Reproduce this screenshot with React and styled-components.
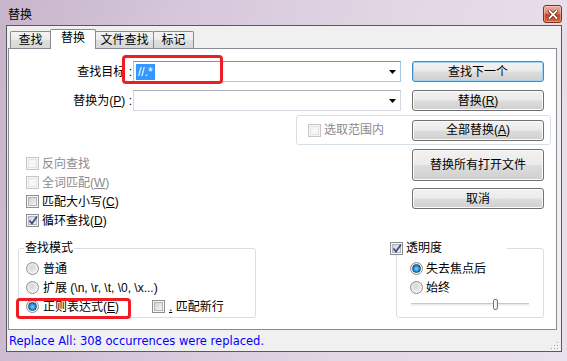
import React from 'react';
import styled, { createGlobalStyle } from 'styled-components';

const GlobalStyle = createGlobalStyle`
  html, body { margin: 0; padding: 0; }
  body {
    width: 567px; height: 361px; overflow: hidden;
    font-family: "Liberation Sans", "Noto Sans CJK SC", sans-serif;
    font-size: 12px; color: #000;
  }
  * { box-sizing: border-box; }
`;

const Window = styled.div`
  width: 567px; height: 361px;
  display: flex; flex-direction: column;
  background: linear-gradient(100deg, #c7b5cc 0%, #d6c7da 30%, #e2d7e5 65%, #e9e1eb 100%);
`;

const TitleBar = styled.div`
  flex: none; height: 25px;
  display: flex; align-items: flex-start; justify-content: space-between;
  padding: 0 5px 0 8px;
`;

const Title = styled.div`
  margin-top: 8px; line-height: 14px; font-size: 12px;
`;

const CloseButton = styled.div`
  margin-top: 5px; width: 19px; height: 18px;
  border: 1px solid #7a3024; border-radius: 3px;
  background: linear-gradient(#eeb0a0 0%, #dc7e66 45%, #c7421f 55%, #d86436 100%);
  box-shadow: inset 0 0 0 1px rgba(255, 255, 255, 0.35);
  display: flex; align-items: center; justify-content: center;
`;

const Client = styled.div`
  flex: 1; margin: 0 5px 9px 6px;
  border: 1px solid #5a5a5a; background: #f0f0f0;
  display: flex; flex-direction: column;
`;

const TabStrip = styled.div`
  flex: none; height: 22px; padding-left: 3px;
  display: flex; align-items: flex-end;
`;

const Tab = styled.div`
  position: relative;
  width: ${p => p.$w}px;
  margin-left: ${p => (p.$first ? 0 : -1)}px;
  height: ${p => (p.$active ? 20 : 17)}px;
  margin-bottom: ${p => (p.$active ? -1 : 0)}px;
  z-index: ${p => (p.$active ? 2 : 1)};
  border: 1px solid #898c95; border-bottom: none; border-radius: 2px 2px 0 0;
  background: ${p => (p.$active ? '#fff' : 'linear-gradient(#f4f4f4, #ebebeb 50%, #dfdfdf 50%, #d7d7d7)')};
  text-align: center;
  padding-top: ${p => (p.$active ? 0 : 1)}px;
  line-height: ${p => (p.$active ? 17 : 15)}px;
  white-space: nowrap;
`;

const Panel = styled.div`
  flex: none; height: 282px; margin: 0 4px 0 1px;
  border: 1px solid #898c95; background: #fff;
  display: flex; flex-direction: column; padding-top: 12px;
`;

const FieldRow = styled.div`
  position: relative; display: flex; align-items: center; height: 21px;
  margin-top: ${p => p.$mt || 0}px;
`;

const FieldLabel = styled.label`
  width: 124px; padding-right: 1px; text-align: right; line-height: 14px; white-space: nowrap;
`;

const Combo = styled.div`
  width: 268px; height: 21px; background: #fff;
  border: 1px solid ${p => (p.$focus ? '#a9c8e6' : '#d3d9e1')};
  border-top-color: ${p => (p.$focus ? '#6d97c4' : '#abadb3')};
  display: flex; align-items: center; padding: 0 4px 0 2px;
`;

const SelectedText = styled.span`
  background: #3399ff; color: #fff; line-height: 16px; padding: 0 2px;
`;

const Arrow = styled.svg`
  margin-left: auto; flex: none;
`;

const Button = styled.button`
  flex: none; width: 132px; height: ${p => (p.$tall ? 32 : 21)}px;
  margin-left: ${p => (p.$ml ? `${p.$ml}px` : '0')};
  padding: 0; font: inherit; color: #000; line-height: 14px;
  border: 1px solid ${p => (p.$default ? '#3c8cc4' : '#707070')}; border-radius: 3px;
  background: linear-gradient(#f2f2f2 0%, #ebebeb 48%, #dddddd 52%, #cfcfcf 100%);
  box-shadow: inset 0 0 0 1px ${p => (p.$default ? '#9fd6f5' : '#fbfbfb')};
  white-space: nowrap;
`;

const PushRight = styled.div`
  margin-left: auto;
`;

const ScopeGroup = styled.div`
  margin: 4px 5px 0 auto; width: 255px; height: 30px;
  border: 1px solid #d5dfe5; border-radius: 3px;
  display: flex; align-items: center; padding: 0 6px 0 11px;
`;

const Mn = styled.u`
  text-decoration: underline; text-underline-offset: 1px;
`;

const OptionsArea = styled.div`
  display: flex; align-items: flex-start;
`;

const CheckList = styled.div`
  display: flex; flex-direction: column; margin-left: 17px; padding-top: 9px;
`;

const ActionColumn = styled.div`
  margin-left: auto; margin-right: 12px; padding-top: 4px;
  display: flex; flex-direction: column; gap: 7px;
`;

const OptionRow = styled.div`
  position: relative; height: 19px; display: flex; align-items: center;
  gap: ${p => p.$gap || 4}px; line-height: 14px; white-space: nowrap;
  color: ${p => (p.$disabled ? '#8b8b8b' : '#000')};
`;

const OptionLabel = styled.span`
  width: ${p => (p.$w ? `${p.$w}px` : 'auto')};
`;

const Box = styled.span`
  position: relative; flex: none; width: 13px; height: 13px;
  border: 1px solid ${p => (p.$disabled ? '#c6c6c6' : '#8e8f8f')};
  background: #f6f6f6;
  &::before {
    content: ''; position: absolute; left: 1px; top: 1px; right: 1px; bottom: 1px;
    border: 1px solid ${p => (p.$disabled ? '#e3e3e3' : '#b2b6bc')};
    background: ${p => (p.$disabled ? '#f7f7f7' : 'linear-gradient(135deg, #cfd2d6, #f4f4f4)')};
  }
`;

const Tick = styled.svg`
  position: absolute; left: 0; top: -1px;
`;

const RadioDot = styled.span`
  flex: none; width: 13px; height: 13px; border-radius: 50%;
  border: 1px solid #8e8f8f;
  background: radial-gradient(circle at 45% 40%, #d8d8d8 0%, #e6e6e6 45%, #fbfbfb 80%);
  display: flex; align-items: center; justify-content: center;
  &::after {
    content: ''; display: ${p => (p.$on ? 'block' : 'none')};
    width: 7px; height: 7px; border-radius: 50%;
    border: 1px solid #1f4f82;
    background: radial-gradient(circle at 50% 55%, #7ad6ff 0%, #2d8fd8 50%, #124a86 100%);
  }
`;

const GroupsRow = styled.div`
  display: flex; align-items: flex-start; margin-top: 18px;
`;

const GroupBox = styled.div`
  position: relative; flex: none;
  width: ${p => p.$w}px; height: 70px;
  margin: ${p => p.$margin};
  border: 1px solid #d5dfe5; border-radius: 3px;
  padding: 10px 0 0 ${p => p.$pl}px;
`;

const Legend = styled.div`
  position: absolute; top: -7px; left: ${p => p.$left}px;
  width: ${p => (p.$w ? `${p.$w}px` : 'auto')};
  height: 13px; background: #fff; padding: 0 1px;
  display: flex; align-items: center; gap: 3px; line-height: 13px; white-space: nowrap;
`;

const Highlight = styled.div`
  position: absolute; pointer-events: none; z-index: 5;
  left: ${p => p.$x}px; top: ${p => p.$y}px; width: ${p => p.$w}px; height: ${p => p.$h}px;
  border: 3px solid #ee1d23; border-radius: 4px;
`;

const Slider = styled.div`
  position: relative; width: 118px; height: 19px; margin-left: 1px; padding-top: 6px;
`;

const Track = styled.div`
  height: 3px; background: #e9ecec;
  border-top: 1px solid #c8c8c8; border-bottom: 1px solid #f4f4f4;
`;

const Thumb = styled.div`
  position: absolute; left: 82px; top: 2px; width: 5px; height: 11px;
  border: 1px solid #777; border-radius: 2px;
  background: linear-gradient(90deg, #ffffff, #e6e6e6);
`;

const StatusBar = styled.div`
  flex: 1; display: flex; align-items: center; padding-left: 2px;
  color: #0000ff; font-family: "DejaVu Sans", sans-serif; font-size: 11.5px;
`;

const Grip = styled.svg`
  margin-left: auto; align-self: flex-end; margin-right: 2px; margin-bottom: 1px;
`;

function CheckBox({ checked, disabled }) {
  return (
    <Box $disabled={disabled}>
      {checked && (
        <Tick width="13" height="13" viewBox="0 0 13 13">
          <path d="M2.5 6.5 L5 9.5 L10 2.5" fill="none" stroke="#3b4c8f" strokeWidth="1.8" />
        </Tick>
      )}
    </Box>
  );
}

function CheckOption({ checked, disabled, children }) {
  return (
    <OptionRow $disabled={disabled} $gap={3}>
      <CheckBox checked={checked} disabled={disabled} />
      <span>{children}</span>
    </OptionRow>
  );
}

const tabs = [
  { label: '查找', w: 41 },
  { label: '替换', w: 46, active: true },
  { label: '文件查找', w: 59 },
  { label: '标记', w: 41 },
];

export default function App() {
  return (
    <>
      <GlobalStyle />
      <Window>
        <TitleBar>
          <Title>替换</Title>
          <CloseButton>
            <svg width="10" height="9" viewBox="0 0 10 9">
              <path d="M1.5 1 L8.5 8 M8.5 1 L1.5 8" stroke="#5a1a10" strokeWidth="3.2" strokeLinecap="square" />
              <path d="M1.5 1 L8.5 8 M8.5 1 L1.5 8" stroke="#fff" strokeWidth="1.8" strokeLinecap="square" />
            </svg>
          </CloseButton>
        </TitleBar>
        <Client>
          <TabStrip>
            {tabs.map((t, i) => (
              <Tab key={t.label} $w={t.w} $active={t.active} $first={i === 0}>
                {t.label}
              </Tab>
            ))}
          </TabStrip>
          <Panel>
            <FieldRow>
              <FieldLabel>查找目标 :</FieldLabel>
              <Combo $focus>
                <SelectedText>//.*</SelectedText>
                <Arrow width="7" height="4" viewBox="0 0 7 4">
                  <path d="M0 0 H7 L3.5 4 Z" fill="#000" />
                </Arrow>
              </Combo>
              <Button $default $ml={11}>查找下一个</Button>
              <Highlight $x={113} $y={-6} $w={101} $h={29} />
            </FieldRow>
            <FieldRow $mt={8}>
              <FieldLabel>
                替换为(<Mn>P</Mn>) :
              </FieldLabel>
              <Combo>
                <Arrow width="7" height="4" viewBox="0 0 7 4">
                  <path d="M0 0 H7 L3.5 4 Z" fill="#000" />
                </Arrow>
              </Combo>
              <Button $ml={11}>
                替换(<Mn>R</Mn>)
              </Button>
            </FieldRow>
            <ScopeGroup>
              <CheckOption disabled>选取范围内</CheckOption>
              <PushRight>
                <Button>
                  全部替换(<Mn>A</Mn>)
                </Button>
              </PushRight>
            </ScopeGroup>
            <OptionsArea>
              <CheckList>
                <CheckOption disabled>反向查找</CheckOption>
                <CheckOption disabled>
                  全词匹配(<Mn>W</Mn>)
                </CheckOption>
                <CheckOption>
                  匹配大小写(<Mn>C</Mn>)
                </CheckOption>
                <CheckOption checked>
                  循环查找(<Mn>D</Mn>)
                </CheckOption>
              </CheckList>
              <ActionColumn>
                <Button $tall>替换所有打开文件</Button>
                <Button>取消</Button>
              </ActionColumn>
            </OptionsArea>
            <GroupsRow>
              <GroupBox $w={238} $pl={7} $margin="0 0 0 9px">
                <Legend $left={5}>查找模式</Legend>
                <OptionRow>
                  <RadioDot />
                  <span>普通</span>
                </OptionRow>
                <OptionRow>
                  <RadioDot />
                  <span>{'扩展 (\\n, \\r, \\t, \\0, \\x...)'}</span>
                </OptionRow>
                <OptionRow>
                  <RadioDot $on />
                  <OptionLabel $w={105}>
                    正则表达式(<Mn>E</Mn>)
                  </OptionLabel>
                  <CheckBox />
                  <span>
                    <Mn>.</Mn> 匹配新行
                  </span>
                  <Highlight $x={-10} $y={1} $w={115} $h={21} />
                </OptionRow>
              </GroupBox>
              <GroupBox $w={148} $pl={13} $margin="0 12px 0 auto">
                <Legend $left={-8} $w={118}>
                  <CheckBox checked />
                  <span>透明度</span>
                </Legend>
                <OptionRow $gap={3}>
                  <RadioDot $on />
                  <span>失去焦点后</span>
                </OptionRow>
                <OptionRow $gap={3}>
                  <RadioDot />
                  <span>始终</span>
                </OptionRow>
                <Slider>
                  <Track />
                  <Thumb />
                </Slider>
              </GroupBox>
            </GroupsRow>
          </Panel>
          <StatusBar>
            <span>Replace All: 308 occurrences were replaced.</span>
            <Grip width="10" height="10" viewBox="0 0 10 10">
              {[[8, 2], [8, 5], [5, 5], [8, 8], [5, 8], [2, 8]].map(([x, y]) => (
                <g key={`${x}-${y}`}>
                  <rect x={x} y={y} width="1" height="1" fill="#a0a0a0" />
                  <rect x={x + 1} y={y + 1} width="1" height="1" fill="#fff" />
                </g>
              ))}
            </Grip>
          </StatusBar>
        </Client>
      </Window>
    </>
  );
}
